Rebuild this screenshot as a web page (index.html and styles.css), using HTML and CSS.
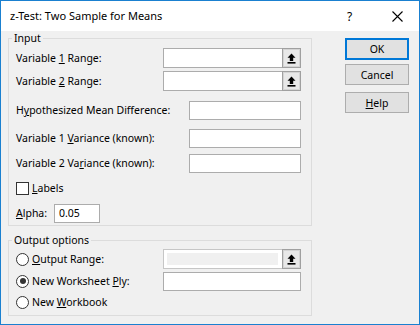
FILE: index.html
```html
<!DOCTYPE html>
<html>
<head>
<meta charset="utf-8">
<title>z-Test: Two Sample for Means</title>
<link rel="stylesheet" href="styles.css">
</head>
<body>
<div class="window">
  <div class="titlebar">
    <span class="title">z-Test: Two Sample for Means</span>
    <span class="title-help">?</span>
    <span class="title-close"><svg width="11" height="11" viewBox="0 0 11 11"><path d="M0.5 0.5L10.5 10.5M10.5 0.5L0.5 10.5" stroke="#000" stroke-width="1.1" fill="none"/></svg></span>
  </div>
  <div class="content">
    <div class="main">
      <fieldset class="group group-input">
        <legend>Input</legend>
        <div class="row row-v1">
          <span class="lbl lbl-range">Variable <u>1</u> Range:</span>
          <div class="refedit">
            <span class="ref-field"></span>
            <span class="ref-pick"><svg width="9" height="11" viewBox="0 0 9 11"><path d="M4.5 0.5L8.5 4.8H6.2V8H2.8V4.8H0.5Z" fill="#000"/><rect x="0.5" y="9" width="8" height="1.6" fill="#000"/></svg></span>
          </div>
        </div>
        <div class="row row-v2">
          <span class="lbl lbl-range">Variable <u>2</u> Range:</span>
          <div class="refedit">
            <span class="ref-field"></span>
            <span class="ref-pick"><svg width="9" height="11" viewBox="0 0 9 11"><path d="M4.5 0.5L8.5 4.8H6.2V8H2.8V4.8H0.5Z" fill="#000"/><rect x="0.5" y="9" width="8" height="1.6" fill="#000"/></svg></span>
          </div>
        </div>
        <div class="row row-hyp">
          <span class="lbl lbl-wide">H<u>y</u>pothesized Mean Difference:</span>
          <span class="textbox tb-wide"></span>
        </div>
        <div class="row row-var1">
          <span class="lbl lbl-wide">Variable 1 <u>V</u>ariance (known):</span>
          <span class="textbox tb-wide"></span>
        </div>
        <div class="row row-var2">
          <span class="lbl lbl-wide">Variable 2 Va<u>r</u>iance (known):</span>
          <span class="textbox tb-wide"></span>
        </div>
        <div class="row row-labels">
          <span class="checkbox"></span>
          <span class="opt-text"><u>L</u>abels</span>
        </div>
        <div class="row row-alpha">
          <span class="lbl lbl-alpha"><u>A</u>lpha:</span>
          <span class="textbox tb-alpha">0.05</span>
        </div>
      </fieldset>
      <fieldset class="group group-output">
        <legend>Output options</legend>
        <div class="row row-o1">
          <span class="lbl-opt lbl-range"><span class="radio"></span><span class="opt-text"><u>O</u>utput Range:</span></span>
          <div class="refedit refedit-disabled">
            <span class="ref-field"><span class="ref-inner"></span></span>
            <span class="ref-pick"><svg width="9" height="11" viewBox="0 0 9 11"><path d="M4.5 0.5L8.5 4.8H6.2V8H2.8V4.8H0.5Z" fill="#000"/><rect x="0.5" y="9" width="8" height="1.6" fill="#000"/></svg></span>
          </div>
        </div>
        <div class="row row-o2">
          <span class="lbl-opt lbl-range"><span class="radio radio-on"></span><span class="opt-text">New Worksheet <u>P</u>ly:</span></span>
          <span class="textbox tb-range"></span>
        </div>
        <div class="row row-o3">
          <span class="radio"></span><span class="opt-text">New <u>W</u>orkbook</span>
        </div>
      </fieldset>
    </div>
    <div class="buttons">
      <button class="btn btn-ok">OK</button>
      <button class="btn btn-cancel">Cancel</button>
      <button class="btn btn-help"><span><u>H</u>elp</span></button>
    </div>
  </div>
</div>
</body>
</html>
```
FILE: styles.css
```css
* { box-sizing: border-box; }
html, body { margin: 0; padding: 0; }
body {
  font-family: "Noto Sans", "Open Sans", sans-serif;
  font-size: 10.5px;
  color: #000;
  background: #fff;
}
u { text-decoration: underline; text-underline-offset: 1px; }

.window {
  width: 420px;
  height: 325px;
  border: 1px solid #1a80d0;
  background: #f0f0f0;
  display: flex;
  flex-direction: column;
}

.titlebar {
  height: 30px;
  background: #fff;
  display: flex;
  align-items: center;
  padding-left: 9px;
  flex: none;
}
.title { font-size: 11px; flex: 1; padding-bottom: 1px; }
.title-help { font-size: 12px; width: 12px; margin-right: 33px; color: #000; }
.title-close { width: 11px; height: 11px; margin-right: 16px; display: flex; }

.content {
  flex: 1;
  display: flex;
  padding-left: 7px;
}
.main { width: 304px; display: flex; flex-direction: column; }

.group {
  margin: 0;
  min-inline-size: 0;
  width: 304px;
  border: 1px solid #dcdcdc;
  padding: 4px 10px 2px 7px;
}
.group legend {
  margin-left: -4px;
  padding: 0 2px;
  font-size: 10.5px;
  line-height: 12px;
}
.group-input { margin-top: 1px; }
.group-output { margin-top: 8px; padding-top: 3px; padding-bottom: 3px; }

.row {
  display: flex;
  align-items: center;
  height: 20px;
}
.row-v2 { margin-top: 3px; }
.row-hyp { margin-top: 9px; }
.row-var1 { margin-top: 8px; }
.row-var2 { margin-top: 5px; }
.row-labels { margin-top: 5px; }
.row-alpha { margin-top: 5px; }
.row-o2 { margin-top: 2px; }
.row-o3 { margin-top: 1px; }

.lbl { display: block; flex: none; white-space: nowrap; }
.lbl-opt { display: flex; align-items: center; flex: none; white-space: nowrap; }
.lbl-range { width: 147px; }
.lbl-wide { width: 173px; }
.lbl-alpha { width: 38px; }
.opt-text { white-space: nowrap; }

.refedit {
  width: 138px;
  height: 20px;
  display: flex;
  border: 1px solid #acacac;
  background: #fff;
}
.ref-field { flex: 1; display: flex; }
.ref-pick {
  width: 19px;
  margin: -1px -1px -1px 0;
  border: 1px solid #a0a0a0;
  box-shadow: inset 0 0 0 1px #d4d4d4;
  background: #e8e8e8;
  display: flex;
  align-items: center;
  justify-content: center;
}
.refedit-disabled { border-color: #c6c6c6; }
.refedit-disabled .ref-field { padding: 3px 4px 3px 3px; }
.ref-inner { flex: 1; background: #f0f0f0; }

.textbox {
  height: 19px;
  border: 1px solid #acacac;
  background: #fff;
  display: flex;
  align-items: center;
  padding-left: 4px;
}
.tb-wide { width: 112px; }
.tb-range { width: 138px; }
.tb-alpha { width: 46px; }

.checkbox {
  width: 13px;
  height: 13px;
  border: 1px solid #333;
  background: #fff;
  margin-right: 3px;
  flex: none;
}
.radio {
  width: 13px;
  height: 13px;
  border: 1px solid #333;
  border-radius: 50%;
  background: #fff;
  margin-right: 3px;
  flex: none;
  display: flex;
  align-items: center;
  justify-content: center;
}
.radio-on::after {
  content: "";
  width: 6px;
  height: 6px;
  border-radius: 50%;
  background: #333;
}

.buttons {
  margin-left: 33px;
  padding-top: 7px;
  display: flex;
  flex-direction: column;
  width: 64px;
}
.btn {
  font-family: "Noto Sans", "Open Sans", sans-serif;
  font-size: 10.5px;
  color: #000;
  width: 64px;
  height: 21px;
  background: #e1e1e1;
  border: 1px solid #adadad;
  padding: 0;
  display: flex;
  align-items: center;
  justify-content: center;
}
.btn-ok { height: 22px; border: 2px solid #0078d7; }
.btn-cancel { margin-top: 4px; }
.btn-help { margin-top: 7px; }
```
